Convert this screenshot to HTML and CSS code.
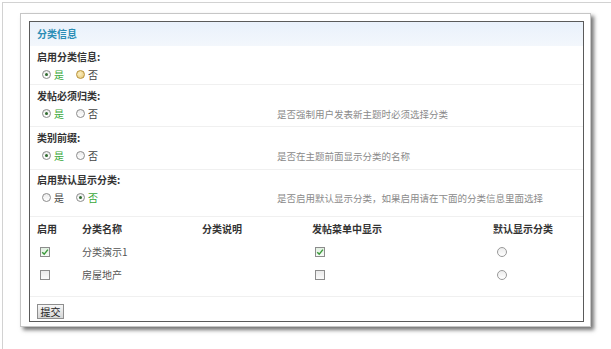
FILE: index.html
```html
<!DOCTYPE html>
<html>
<head>
    <title>分类信息</title>
    <link rel="stylesheet" href="styles.css">
</head>
<body>
<div class="frame">
    <div class="card">
        <div class="panel">
            <div class="panel-title">分类信息</div>

            <!-- 启用分类信息 -->
            <div class="section first">
                <div class="label">启用分类信息:</div>
                <div class="opts-row">
                    <div class="opts">
                        <span class="radio checked"></span><span class="opt on">是</span>
                        <span class="radio hover"></span><span class="opt">否</span>
                    </div>
                </div>
            </div>

            <!-- 发帖必须归类 -->
            <div class="section">
                <div class="label">发帖必须归类:</div>
                <div class="opts-row">
                    <div class="opts">
                        <span class="radio checked"></span><span class="opt on">是</span>
                        <span class="radio"></span><span class="opt">否</span>
                    </div>
                    <div class="desc">是否强制用户发表新主题时必须选择分类</div>
                </div>
            </div>

            <!-- 类别前缀 -->
            <div class="section mid">
                <div class="label">类别前缀:</div>
                <div class="opts-row">
                    <div class="opts">
                        <span class="radio checked"></span><span class="opt on">是</span>
                        <span class="radio"></span><span class="opt">否</span>
                    </div>
                    <div class="desc">是否在主题前面显示分类的名称</div>
                </div>
            </div>

            <!-- 启用默认显示分类 -->
            <div class="section wide">
                <div class="label">启用默认显示分类:</div>
                <div class="opts-row">
                    <div class="opts">
                        <span class="radio"></span><span class="opt">是</span>
                        <span class="radio checked"></span><span class="opt on">否</span>
                    </div>
                    <div class="desc">是否启用默认显示分类，如果启用请在下面的分类信息里面选择</div>
                </div>
            </div>

            <!-- 分类列表 -->
            <div class="cat-table">
                <div class="cat-row head">
                    <span>启用</span>
                    <span>分类名称</span>
                    <span>分类说明</span>
                    <span>发帖菜单中显示</span>
                    <span>默认显示分类</span>
                </div>
                <div class="cat-row">
                    <span><span class="check checked"><svg width="8" height="8" viewBox="0 0 8 8"><path d="M1.2 4.2 L3.2 6.1 L6.9 1.6" fill="none" stroke="#3c9a3c" stroke-width="1.4"/></svg></span></span>
                    <span class="name">分类演示1</span>
                    <span></span>
                    <span><span class="check checked"><svg width="8" height="8" viewBox="0 0 8 8"><path d="M1.2 4.2 L3.2 6.1 L6.9 1.6" fill="none" stroke="#3c9a3c" stroke-width="1.4"/></svg></span></span>
                    <span><span class="radio col"></span></span>
                </div>
                <div class="cat-row">
                    <span><span class="check"></span></span>
                    <span class="name">房屋地产</span>
                    <span></span>
                    <span><span class="check"></span></span>
                    <span><span class="radio col"></span></span>
                </div>
            </div>

            <div class="actions">
                <button class="btn">提交</button>
            </div>
        </div>
    </div>
</div>
</body>
</html>
```

FILE: styles.css
```css
body {
    margin: 0;
    background: #fff;
    font-family: "Noto Sans CJK SC", "DejaVu Sans", sans-serif;
    font-size: 10px;
    color: #333;
}
.frame {
    margin: 2px 0 0 2px;
    height: 347px;
    border-left: 1px solid #d2d2d2;
    border-top: 1px solid #d2d2d2;
    padding: 10px 0 0 17px;
    box-sizing: border-box;
}
.card {
    width: 571px;
    height: 314px;
    box-sizing: border-box;
    border: 1px solid #c6c6c6;
    background: #fff;
    padding: 7px 6px 4px 8px;
    box-shadow: 3px 3px 4px rgba(0, 0, 0, 0.55);
}
.panel {
    width: 555px;
    height: 301px;
    box-sizing: border-box;
    border: 1px solid #5a5a5a;
}
.panel-title {
    height: 24px;
    line-height: 24px;
    padding-left: 7px;
    background: linear-gradient(#e9f1fb, #f3f7fc);
    color: #2a8db5;
    font-weight: bold;
}
.section {
    padding: 3px 7px 4px;
    border-bottom: 1px solid #f0f0f0;
}
.section.first {
    padding-bottom: 1px;
}
.section.mid {
    padding-bottom: 5px;
}
.section.wide {
    padding-top: 2px;
    padding-bottom: 10px;
}
.label {
    height: 16px;
    line-height: 16px;
    font-weight: bold;
    color: #333;
}
.opts-row {
    display: flex;
    align-items: center;
    height: 18px;
}
.opts {
    width: 240px;
    display: flex;
    align-items: center;
}
.opt {
    margin-right: 7px;
    color: #444;
}
.opt.on {
    color: #3aa83a;
}
.desc {
    font-size: 9.5px;
    color: #8a8a8a;
    padding-top: 1px;
}
.radio {
    display: inline-block;
    position: relative;
    width: 9px;
    height: 9px;
    box-sizing: border-box;
    border: 1px solid #8c8c8c;
    border-radius: 50%;
    background: linear-gradient(#ececec, #fff);
    margin: 0 3px 0 5px;
}
.radio.checked::after {
    content: "";
    position: absolute;
    left: 2px;
    top: 2px;
    width: 3px;
    height: 3px;
    border-radius: 50%;
    background: #2f6a2f;
}
.radio.hover {
    border-color: #b8923a;
    background: radial-gradient(circle at 40% 40%, #fbefc2, #e5c46e);
}
.radio.col {
    width: 10px;
    height: 10px;
    margin: 0 0 0 4px;
    border-color: #999;
}
.check {
    display: inline-flex;
    align-items: center;
    justify-content: center;
    width: 10px;
    height: 10px;
    box-sizing: border-box;
    border: 1px solid #8c8c8c;
    background: linear-gradient(#eaeaea, #fafafa);
    margin-left: 3px;
    vertical-align: middle;
}
.check.checked {
    background: linear-gradient(#e2f0e2, #f6fbf6);
}
.cat-table {
    padding: 0 7px 10px;
    border-bottom: 1px solid #f0f0f0;
}
.cat-row {
    display: grid;
    grid-template-columns: 45px 120px 110px 181px 1fr;
    align-items: center;
    height: 23px;
}
.cat-row > span {
    display: flex;
    align-items: center;
}
.cat-row.head {
    height: 23px;
    font-weight: bold;
    color: #333;
}
.name {
    color: #555;
}
.actions {
    padding: 7px 7px 0;
}
.btn {
    height: 15px;
    width: 27px;
    padding: 0;
    font-family: "Noto Sans CJK SC", sans-serif;
    font-size: 10px;
    line-height: 13px;
    color: #222;
    border: 1px solid #8e8e8e;
    background: linear-gradient(#f6f6f6, #d6d6d6);
}
```
